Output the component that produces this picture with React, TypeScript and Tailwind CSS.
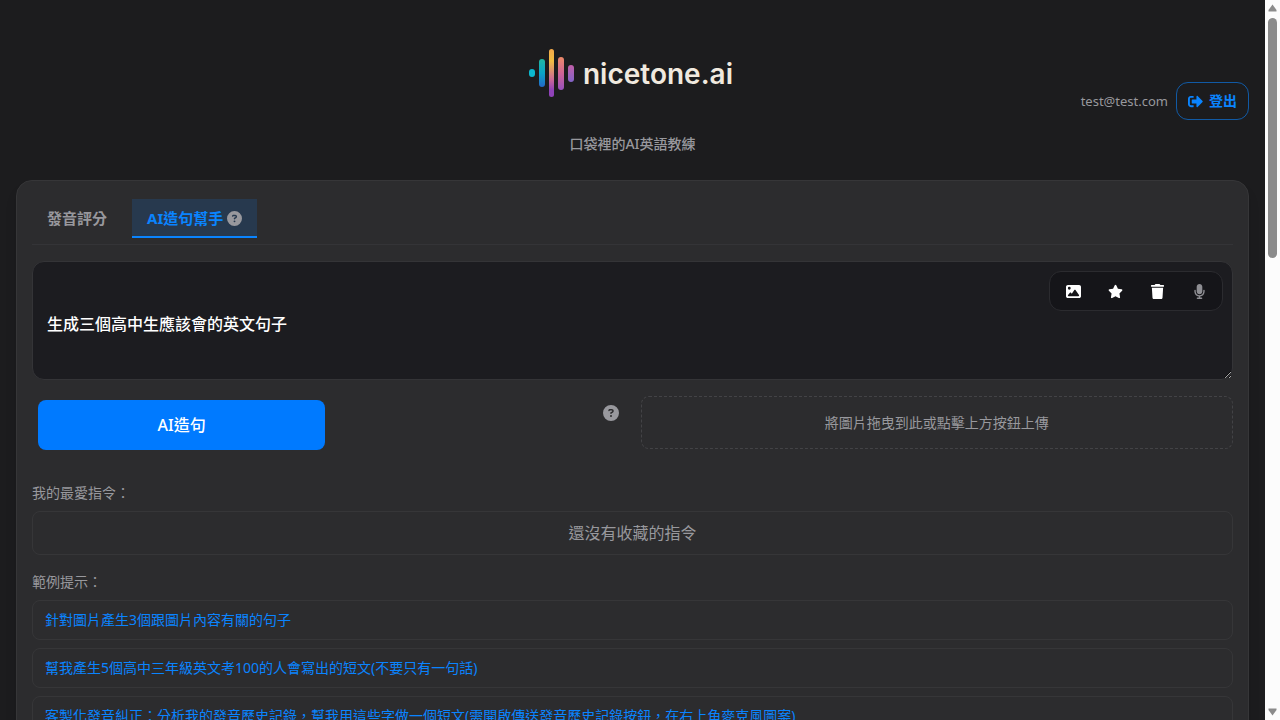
import React from "react";
import { FaSignOutAlt } from "react-icons/fa";
import { FaCircleQuestion, FaImage, FaMicrophone, FaStar, FaTrash } from "react-icons/fa6";

const prompts = [
  "針對圖片產生3個跟圖片內容有關的句子",
  "幫我產生5個高中三年級英文考100的人會寫出的短文(不要只有一句話)",
  "客製化發音糾正：分析我的發音歷史記錄，幫我用這些字做一個短文(需開啟傳送發音歷史記錄按鈕，在右上角麥克風圖案)",
];

function Logo() {
  return (
    <div className="flex items-center gap-2 pr-1">
      <svg width="47" height="50" viewBox="0 0 47 50" aria-hidden="true">
        <defs>
          <linearGradient id="teal" x1="0" y1="0" x2="0" y2="1">
            <stop offset="0" stopColor="#22b8a0" />
            <stop offset="0.5" stopColor="#0aa5c8" />
            <stop offset="1" stopColor="#2468c8" />
          </linearGradient>
          <linearGradient id="gold" x1="0" y1="0" x2="0" y2="1">
            <stop offset="0" stopColor="#f5a94a" />
            <stop offset="0.25" stopColor="#f2bd42" />
            <stop offset="0.65" stopColor="#c8659a" />
            <stop offset="0.85" stopColor="#8f42b8" />
            <stop offset="1" stopColor="#8f42b8" />
          </linearGradient>
          <linearGradient id="coral" x1="0" y1="0" x2="0" y2="1">
            <stop offset="0" stopColor="#ec8a68" />
            <stop offset="0.5" stopColor="#cf6397" />
            <stop offset="1" stopColor="#9550bd" />
          </linearGradient>
          <linearGradient id="violet" x1="0" y1="0" x2="0" y2="1">
            <stop offset="0" stopColor="#c15fa9" />
            <stop offset="1" stopColor="#8264c8" />
          </linearGradient>
        </defs>
        <rect x="1" y="21" width="6" height="8" rx="3" fill="#0cb8cf" />
        <rect x="11" y="11" width="6" height="28" rx="3" fill="url(#teal)" />
        <rect x="21" y="1" width="5" height="48" rx="2.5" fill="url(#gold)" />
        <rect x="30" y="9" width="6" height="33" rx="3" fill="url(#coral)" />
        <rect x="40" y="17" width="6" height="17" rx="3" fill="url(#violet)" />
      </svg>
      <span className="pt-[2px] font-['Inter',sans-serif] text-[28px] leading-8 font-semibold text-[#f0e9df]">
        nicetone.ai
      </span>
    </div>
  );
}

function ToolButton({ label, className, children }: { label: string; className: string; children: React.ReactNode }) {
  return (
    <button type="button" aria-label={label} className={`flex size-8 items-center justify-center ${className}`}>
      {children}
    </button>
  );
}

function Scrollbar() {
  return (
    <div className="flex w-[15px] shrink-0 flex-col items-center bg-[#fcfcfc] py-1" aria-hidden="true">
      <svg width="9" height="8" viewBox="0 0 9 8">
        <path d="M4.5 0.5 8.5 6v1.500h-8V6z" fill="#8b8b8b" />
      </svg>
      <div className="mt-[6px] h-60 w-[9px] rounded-full bg-[#8b8b8b]" />
      <svg className="mt-auto" width="9" height="8" viewBox="0 0 9 8">
        <path d="M4.500 7.500 8.500 2V.5h-8V2z" fill="#8b8b8b" />
      </svg>
    </div>
  );
}

export default function App() {
  return (
    <div className="flex h-screen overflow-hidden bg-[#1c1c1e] font-['Noto_Sans','Noto_Sans_CJK_TC',sans-serif] text-[#98989d]">
      <main className="min-w-0 flex-1 overflow-hidden px-4">
        <header className="grid h-[180px] grid-cols-[1fr_auto_1fr] pt-12">
          <div />
          <div className="flex flex-col items-center">
            <Logo />
            <p className="mt-[34px] text-sm leading-6 font-medium">口袋裡的AI英語教練</p>
          </div>
          <div className="mt-[34px] flex items-center gap-2 self-start justify-self-end">
            <span className="pt-[2px] text-[13px]">test@test.com</span>
            <button
              type="button"
              className="flex h-[38px] items-center gap-[6px] rounded-xl border border-[#0a84ff]/60 px-[11px] text-sm font-bold text-[#0a84ff]"
            >
              <FaSignOutAlt size={15} />
              登出
            </button>
          </div>
        </header>

        <section className="rounded-t-2xl border border-[#363638] bg-[#2c2c2e] px-[15px] pt-[18px] shadow-lg">
          <nav className="flex gap-[10px] border-b border-[#343437] pb-[6px]">
            <button type="button" className="h-[39px] border-b-2 border-transparent px-[15px] pt-px text-[15px] font-bold">
              發音評分
            </button>
            <button
              type="button"
              className="flex h-[39px] items-center gap-1 border-b-2 border-[#0a84ff] bg-[#27394e] px-[15px] pt-px text-[15px] font-bold text-[#0a84ff]"
            >
              AI造句幫手
              <FaCircleQuestion size={15} className="text-[#98989d]" />
            </button>
          </nav>

          <div className="relative mt-4">
            <textarea
              aria-label="造句指令"
              defaultValue="生成三個高中生應該會的英文句子"
              className="block h-[119px] w-full resize-y rounded-xl border border-[#343437] bg-[#1c1c20] px-[14px] pt-[50px] text-base leading-6 font-medium text-white outline-none"
            />
            <div className="absolute top-[10px] right-[10px] flex h-10 items-center gap-[10px] rounded-xl border border-[#2b2b2f] bg-[#151519] px-[7px] text-white">
              <ToolButton label="上傳圖片" className="text-white">
                <FaImage size={15} />
              </ToolButton>
              <ToolButton label="收藏指令" className="text-white">
                <FaStar size={15} />
              </ToolButton>
              <ToolButton label="清除" className="text-white">
                <FaTrash size={15} />
              </ToolButton>
              <ToolButton label="發音歷史記錄" className="text-[#8e8e93]">
                <FaMicrophone size={15} />
              </ToolButton>
            </div>
          </div>

          <div className="mt-4 grid grid-cols-2 gap-4">
            <div className="flex items-start justify-between pl-[6px]">
              <button
                type="button"
                className="mt-1 h-[50px] w-[49%] rounded-lg bg-[#007aff] text-base font-medium text-white"
              >
                AI造句
              </button>
              <FaCircleQuestion size={16} className="mt-[9px] mr-[6px]" />
            </div>
            <div className="flex h-[53px] items-center justify-center rounded-lg border border-dashed border-[#434346] text-sm">
              將圖片拖曳到此或點擊上方按鈕上傳
            </div>
          </div>

          <h2 className="mt-[31px] text-sm leading-6">我的最愛指令：</h2>
          <div className="mt-[6px] flex h-11 items-center justify-center rounded-lg border border-[#363638] text-base">
            還沒有收藏的指令
          </div>

          <h2 className="mt-[15px] text-sm leading-6">範例提示：</h2>
          <div className="mt-[6px] flex flex-col gap-2 pb-4">
            {prompts.map((prompt) => (
              <button
                key={prompt}
                type="button"
                className="h-10 rounded-lg border border-[#363638] px-3 text-left text-sm text-[#0a84ff]"
              >
                {prompt}
              </button>
            ))}
          </div>
        </section>
      </main>
      <Scrollbar />
    </div>
  );
}
